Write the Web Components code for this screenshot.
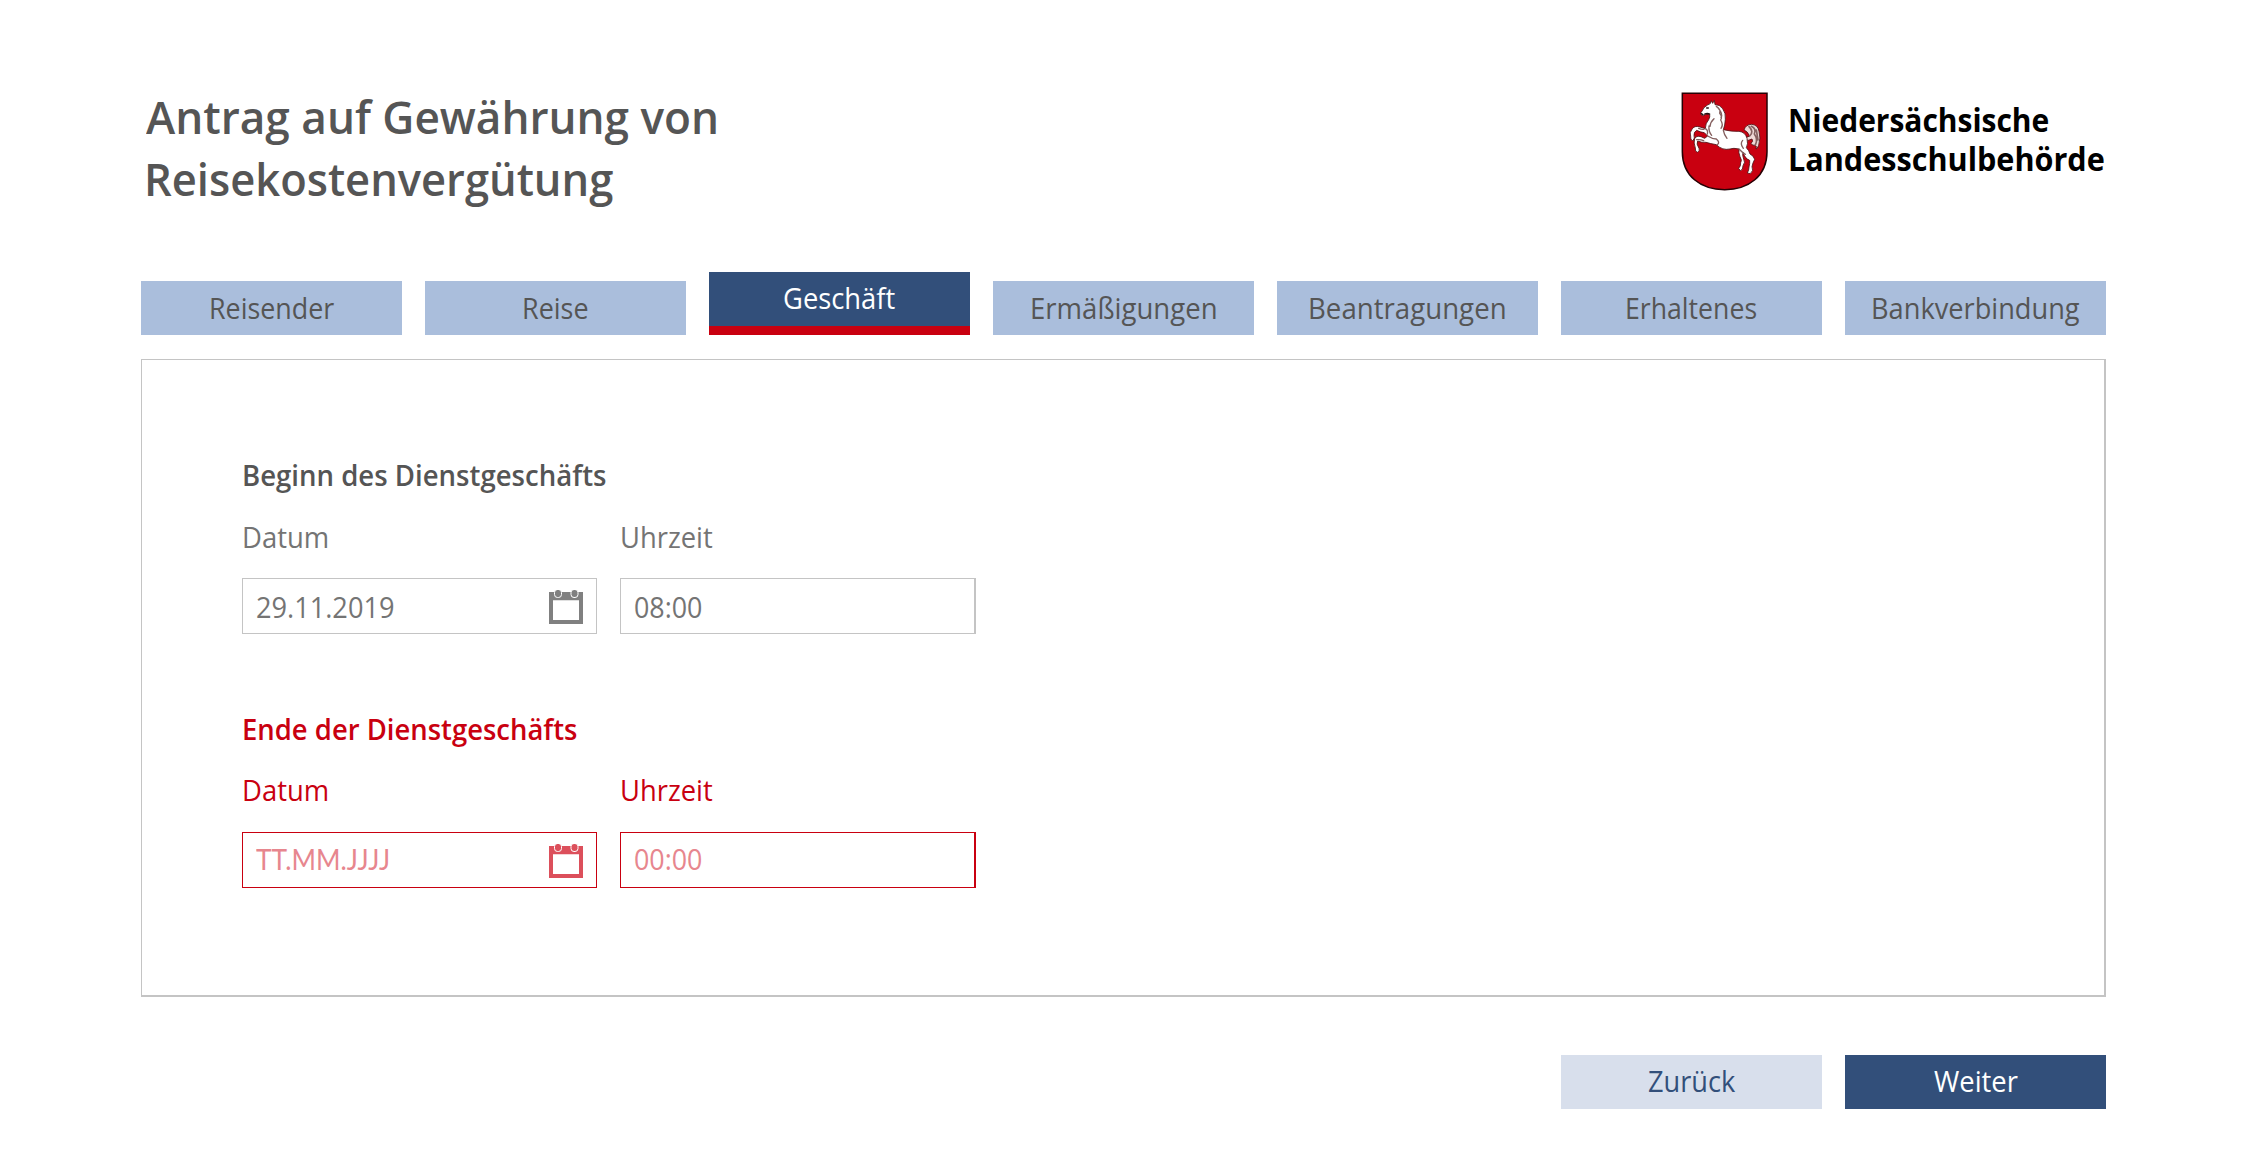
<!DOCTYPE html>
<html lang="de">
<head>
<meta charset="utf-8">
<title>Antrag auf Gewährung von Reisekostenvergütung</title>
<style>
  body { margin: 0; background: #fff; font-family: "Open Sans", "Noto Sans", sans-serif; color: #555; }
</style>
</head>
<body>
<travel-app></travel-app>
<script>
const define = (name, html, init) => customElements.define(name, class extends HTMLElement {
  connectedCallback() {
    if (this.shadowRoot) return;
    this.attachShadow({ mode: 'open' }).innerHTML = html;
    if (init) init.call(this, this.shadowRoot);
  }
});

// Text set to a given inked width, independent of the width of the installed font.
const ctx = document.createElement('canvas').getContext('2d');
define('fit-text', `
  <style>
    :host { display: inline-block; white-space: nowrap; text-align: left; }
    :host([caps]) { font-family: Lato, "Open Sans", sans-serif; }
    span { display: inline-block; transform-origin: 0 50%; }
  </style><span><slot></slot></span>`, function (root) {
  const cs = getComputedStyle(this);
  ctx.font = `${cs.fontWeight} ${cs.fontSize} ${cs.fontFamily}`;
  const m = ctx.measureText(this.textContent);
  const k = this.getAttribute('w') / (m.actualBoundingBoxRight + m.actualBoundingBoxLeft);
  root.querySelector('span').style.transform = `scaleX(${k})`;
  this.style.width = m.width * k + 'px';
});

define('state-logo', `
  <style>
    :host { display: flex; color: #000; font-weight: 700; font-size: 32px; line-height: 39px; }
    svg { width: 110px; height: 120px; flex: none; }
    div { display: flex; flex-direction: column; padding-top: 20px; margin-left: 8px; }
  </style>
  <svg viewBox="0 0 330 360">
    <path d="M37 40H291V215C291 288 236 329 164 329S37 288 37 215Z" fill="#c90010" stroke="#260205" stroke-width="4.5"/>
    <g stroke="#4a1216" stroke-width="2.5" stroke-linejoin="round" stroke-linecap="round">
      <path fill="#f0d9d7" d="M218 166Q226 176 239 168Q232 153 222 150Q227 134 244 133Q263 134 267 153Q273 174 266 196Q262 207 258 207Q261 196 255 196Q246 197 243 190Q251 184 246 177Q235 184 224 179Z"/>
      <path fill="#fff" d="M121 70L124 62L128 70L133 61L135 74Q149 73 158 86Q168 99 166 118Q165 137 160 149Q184 155 207 154Q226 156 231 175Q235 193 229 203Q237 211 240 222Q251 227 254 238Q248 249 246 260Q252 272 241 281L232 279Q237 271 237 261Q240 249 239 241Q225 236 219 217Q216 225 221 237Q227 247 219 257Q219 270 211 272L206 265Q213 258 212 248Q217 241 210 230Q205 217 207 207Q190 203 180 207Q157 212 139 194Q121 191 108 187Q94 188 83 183Q78 191 87 205Q91 213 82 217Q75 215 76 204Q70 188 74 176Q79 166 93 170L104 175L113 168L103 158Q92 157 80 151Q71 156 72 166Q76 174 68 183Q60 178 62 169Q57 158 67 146Q75 136 90 141L106 146Q106 130 116 119Q121 111 119 103Q105 100 100 107L93 104Q91 97 97 92Q100 82 111 76Z"/>
      <path fill="none" stroke="#85605f" stroke-width="4" d="M139 79Q153 88 149 100Q158 110 152 120Q161 134 153 145M145 85Q160 102 153 112M117 138Q115 154 125 166M113 168Q127 177 139 177Q151 187 142 194M106 146Q115 151 112 162M132 116Q121 126 120 139M86 145Q94 149 102 148M80 179Q92 178 101 182M160 151Q162 163 171 175M218 181Q209 191 220 205M207 207Q216 217 226 223"/>
      <path fill="none" stroke="#85605f" stroke-width="5" d="M244 139Q260 146 253 162Q265 178 256 195M237 140Q253 155 239 168M259 150L264 180"/>
      <path fill="none" stroke="#231012" stroke-width="4" d="M110 84L115 84M94 101L99 104M119 102Q112 99 104 102"/>
    </g>
  </svg>
  <div><fit-text w="258.5">Niedersächsische</fit-text><fit-text w="314">Landesschulbehörde</fit-text></div>`);

define('page-header', `
  <style>
    :host { display: flex; justify-content: space-between; align-items: flex-start; padding-top: 80px; height: 192px; }
    h1 { margin: 0; padding: 5px 0 0 5px; font-size: 46px; line-height: 62px; font-weight: 600; display: flex; flex-direction: column; }
    h1 fit-text + fit-text { margin-left: -2px; }
    state-logo { width: 436px; }
  </style>
  <h1><fit-text w="570">Antrag auf Gewährung von</fit-text><fit-text w="465">Reisekostenvergütung</fit-text></h1>
  <state-logo></state-logo>`);

define('tab-item', `
  <style>
    :host { box-sizing: border-box; flex: 1; height: 54px; background: #aabedc; text-align: center; font-size: 29px; line-height: 53px; }
    :host([active]) { height: 63px; background: #324f7a; color: #fff; border-bottom: 9px solid #c90010; line-height: 51px; }
  </style><slot></slot>`);

define('tab-bar', `
  <style>:host { display: flex; align-items: flex-end; gap: 23px; height: 63px; }</style><slot></slot>`);

define('calendar-icon', `
  <style>:host { display: block; width: 34px; height: 34px; } svg { display: block; }</style>
  <svg width="34" height="34" viewBox="0 0 34 34" fill="currentColor">
    <path fill-rule="evenodd" d="M0 2H34V34H0ZM4 11V30H30V11Z"/>
    <path d="M4 10H30V12H4Z" fill="#fff" opacity=".75"/>
    <g stroke="#fff" stroke-width="1"><rect x="5.5" y="-.5" width="7" height="8" rx="3"/><rect x="22" y="-.5" width="7" height="8" rx="3"/></g>
  </svg>`);

define('form-field', `
  <style>
    :host { display: flex; flex-direction: column; width: 355px; font-size: 29px; color: #747474; }
    :host([wide]) { width: 356px; }
    label { line-height: 40px; height: 61px; }
    .box { box-sizing: border-box; height: 56px; border: 1px solid #c4c4c4; display: flex; justify-content: space-between; align-items: flex-start; padding: 0 13px; line-height: 55px; }
    :host([wide]) .box { border-right-width: 2px; }
    calendar-icon { margin-top: 11px; color: #808080; }
    :host([error]) { color: #c90010; }
    :host([error]) label { height: 62px; }
    :host([error]) .box { border-color: #c90010; line-height: 52px; color: #e7868e; }
    :host([error]) calendar-icon { color: #dc4f5b; }
  </style>
  <label><slot name="label"></slot></label>
  <div class="box"><slot></slot></div>`, function (root) {
  if (this.hasAttribute('date')) root.querySelector('.box').append(document.createElement('calendar-icon'));
});

define('field-group', `
  <style>
    :host { display: block; }
    h2 { margin: 0; font-size: 29px; font-weight: 600; line-height: 40px; height: 62px; }
    :host([error]) h2 { color: #c90010; height: 61px; }
    div { display: flex; gap: 23px; }
  </style>
  <h2><slot name="title"></slot></h2><div><slot></slot></div>`);

define('form-panel', `
  <style>:host { box-sizing: border-box; margin-top: 24px; height: 638px; border: solid #c4c4c4; border-width: 1px 2px 2px 1px; padding: 95px 100px 0; display: flex; flex-direction: column; gap: 75px; }</style><slot></slot>`);

define('action-button', `
  <style>
    :host { width: 261px; height: 54px; line-height: 52px; font-size: 29px; text-align: center; background: #d8dfec; color: #324f7a; }
    :host([primary]) { background: #324f7a; color: #fff; }
  </style><slot></slot>`);

define('action-bar', `
  <style>:host { display: flex; justify-content: flex-end; gap: 23px; margin-top: 58px; }</style><slot></slot>`);

define('travel-app', `
  <style>:host { box-sizing: border-box; display: flex; flex-direction: column; width: 2106px; height: 1150px; padding-left: 141px; }</style>
  <page-header></page-header>
  <tab-bar>
    <tab-item><fit-text w="123.5">Reisender</fit-text></tab-item>
    <tab-item><fit-text w="63.5">Reise</fit-text></tab-item>
    <tab-item active><fit-text w="111">Geschäft</fit-text></tab-item>
    <tab-item><fit-text w="184">Ermäßigungen</fit-text></tab-item>
    <tab-item><fit-text w="195">Beantragungen</fit-text></tab-item>
    <tab-item><fit-text w="129.5">Erhaltenes</fit-text></tab-item>
    <tab-item><fit-text w="207">Bankverbindung</fit-text></tab-item>
  </tab-bar>
  <form-panel>
    <field-group>
      <fit-text slot="title" w="361.5">Beginn des Dienstgeschäfts</fit-text>
      <form-field date><fit-text slot="label" w="83.5">Datum</fit-text><fit-text w="137">29.11.2019</fit-text></form-field>
      <form-field wide><fit-text slot="label" w="90.5">Uhrzeit</fit-text><fit-text w="67">08:00</fit-text></form-field>
    </field-group>
    <field-group error>
      <fit-text slot="title" w="332.5">Ende der Dienstgeschäfts</fit-text>
      <form-field date error><fit-text slot="label" w="83.5">Datum</fit-text><fit-text caps w="132">TT.MM.JJJJ</fit-text></form-field>
      <form-field wide error><fit-text slot="label" w="90.5">Uhrzeit</fit-text><fit-text w="67">00:00</fit-text></form-field>
    </field-group>
  </form-panel>
  <action-bar>
    <action-button><fit-text w="87">Zurück</fit-text></action-button>
    <action-button primary><fit-text w="84">Weiter</fit-text></action-button>
  </action-bar>`);
</script>
</body>
</html>
